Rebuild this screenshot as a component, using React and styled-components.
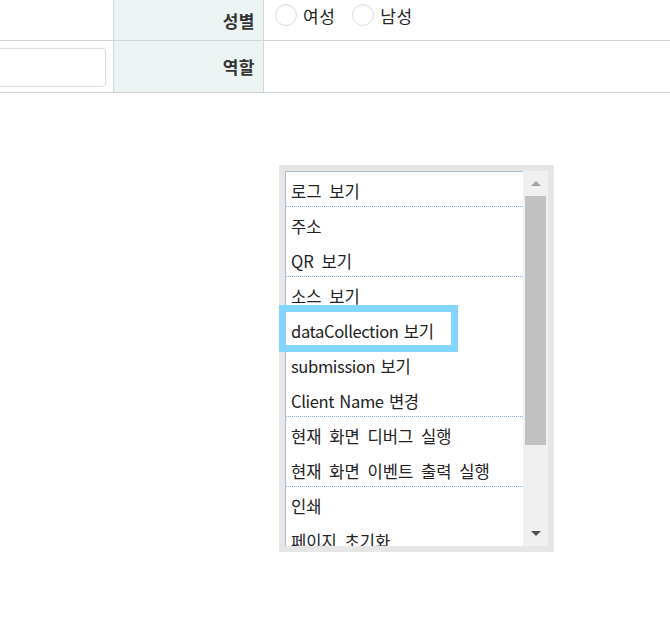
import React from 'react';
import styled, { createGlobalStyle } from 'styled-components';

const GlobalStyle = createGlobalStyle`
    html, body {
        margin: 0;
        padding: 0;
        background: #ffffff;
        overflow: hidden;
        font-family: "Noto Sans CJK KR", "Liberation Sans", sans-serif;
        color: #222;
    }
`;

const Page = styled.div`
    width: 670px;
    height: 642px;
    display: flex;
    flex-direction: column;
`;

const FormTable = styled.div`
    display: grid;
    grid-template-columns: 113px 150px 1fr;
    grid-template-rows: 41px 52px;
`;

const Cell = styled.div`
    border-bottom: 1px solid #d3d6d9;
    border-left: ${p => (p.$first ? 'none' : '1px solid #d3d6d9')};
    background: ${p => (p.$head ? '#ebf4f3' : '#ffffff')};
    display: flex;
    align-items: center;
    justify-content: ${p => (p.$head ? 'flex-end' : 'flex-start')};
    padding: ${p => (p.$head ? '0 8px 0 0' : '0 0 0 11px')};
    overflow: hidden;
`;

const Label = styled.span`
    font-size: 17px;
    font-weight: 700;
    letter-spacing: 0.5px;
    color: #333;
`;

const TextInput = styled.div`
    width: 120px;
    height: 39px;
    margin-left: -25px;
    margin-top: 1px;
    border: 1px solid #dcdcdc;
    border-radius: 4px;
    box-sizing: border-box;
`;

const RadioGroup = styled.div`
    display: flex;
    align-items: center;
    gap: 17px;
    margin-top: -10px;
`;

const RadioItem = styled.label`
    display: flex;
    align-items: center;
    gap: 6px;
    font-size: 17px;
    letter-spacing: 0.5px;
    color: #222;
`;

const RadioCircle = styled.span`
    width: 22px;
    height: 22px;
    border-radius: 50%;
    border: 1px solid #dedede;
    box-shadow: inset 0 1px 2px rgba(0, 0, 0, 0.06);
    box-sizing: border-box;
    background: #fff;
`;

const Frame = styled.div`
    position: relative;
    margin: 72px 0 0 279px;
    width: 275px;
    height: 387px;
    background: #e6e6e6;
    padding: 6px;
    box-sizing: border-box;
    display: flex;
`;

const List = styled.ul`
    list-style: none;
    margin: 0;
    padding: 0;
    width: 238px;
    height: 375px;
    overflow: hidden;
    background: #fff;
    border-left: 1px solid #a6bbcf;
    border-top: 1px solid #a6bbcf;
    box-sizing: border-box;
`;

const Item = styled.li`
    height: 35px;
    box-sizing: border-box;
    padding: 3px 0 0 5px;
    display: flex;
    align-items: center;
    font-size: 16.6px;
    word-spacing: ${p => (p.$latin ? '2px' : '4px')};
    letter-spacing: ${p => (p.$latin ? '-0.4px' : '0')};
    color: #222;
    white-space: nowrap;
    border-bottom: 1px ${p => (p.$sep ? 'dotted #8fb1d3' : 'solid transparent')};
`;

const ScrollBar = styled.div`
    width: 25px;
    height: 375px;
    background: #f0f0f0;
    display: flex;
    flex-direction: column;
    align-items: center;
`;

const Arrow = styled.div`
    height: 25px;
    width: 100%;
    display: flex;
    align-items: center;
    justify-content: center;
    &::after {
        content: '';
        border-left: 5px solid transparent;
        border-right: 5px solid transparent;
        ${p => (p.$down
            ? 'border-top: 5px solid #505050;'
            : 'border-bottom: 5px solid #a3a3a3;')}
    }
`;

const Spacer = styled.div`
    flex: 1;
`;

const Thumb = styled.div`
    width: 21px;
    height: 249px;
    background: #c1c1c1;
`;

const Highlight = styled.div`
    position: absolute;
    left: 0;
    top: 140px;
    width: 179px;
    height: 47px;
    border: 7px solid #82d5fd;
    box-sizing: border-box;
    pointer-events: none;
`;

const items = [
    { text: '로그 보기', sep: true },
    { text: '주소' },
    { text: 'QR 보기', sep: true },
    { text: '소스 보기' },
    { text: 'dataCollection 보기', latin: true },
    { text: 'submission 보기', latin: true },
    { text: 'Client Name 변경', sep: true, latin: true },
    { text: '현재 화면 디버그 실행' },
    { text: '현재 화면 이벤트 출력 실행', sep: true },
    { text: '인쇄' },
    { text: '페이지 초기화' },
];

export default function App() {
    return (
        <Page>
            <GlobalStyle />
            <FormTable>
                <Cell $first />
                <Cell $head><Label>성별</Label></Cell>
                <Cell>
                    <RadioGroup>
                        <RadioItem><RadioCircle />여성</RadioItem>
                        <RadioItem><RadioCircle />남성</RadioItem>
                    </RadioGroup>
                </Cell>
                <Cell $first><TextInput /></Cell>
                <Cell $head><Label>역할</Label></Cell>
                <Cell />
            </FormTable>
            <Frame>
                <List>
                    {items.map(it => (
                        <Item key={it.text} $sep={it.sep} $latin={it.latin}>{it.text}</Item>
                    ))}
                </List>
                <ScrollBar>
                    <Arrow />
                    <Thumb />
                    <Spacer />
                    <Arrow $down />
                </ScrollBar>
                <Highlight />
            </Frame>
        </Page>
    );
}
